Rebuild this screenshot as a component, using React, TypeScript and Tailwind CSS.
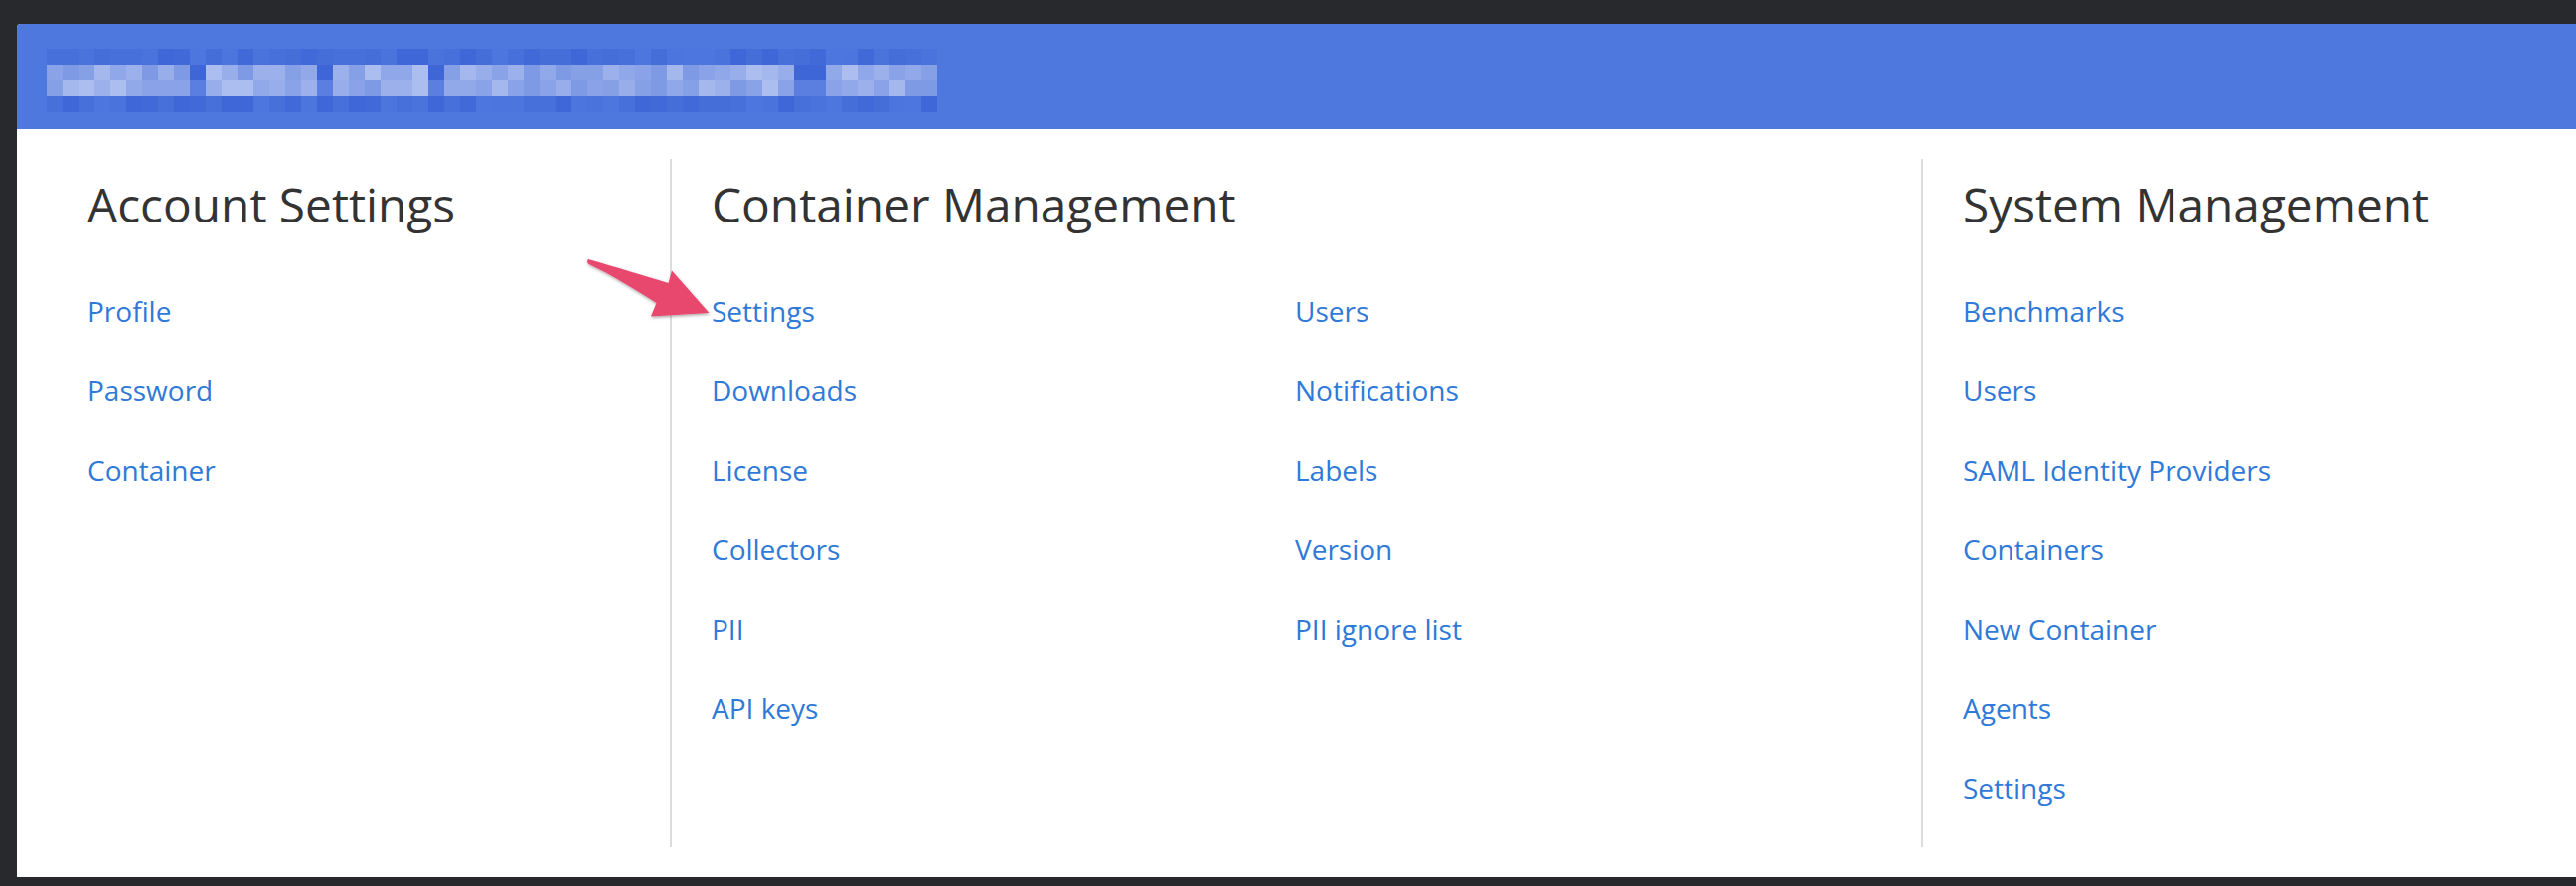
import React from "react";

const FONT = { fontFamily: '"Open Sans", "Noto Sans", sans-serif' };

function Mosaic() {
  const cols = 56;
  const gaps = new Set([9, 17, 24, 47, 48]);
  const light = ["#8aa3e8", "#91a9e9", "#9cb1ec", "#7f9ae4", "#98aeeb", "#a5b8ee", "#86a0e6", "#acbdf0", "#90a8ea"];
  const dark = ["#4a73dc", "#456ed9", "#4d76de", "#4870db", "#4269d8", "#4c75dd", "#4067d7"];
  let seed = 7;
  const rnd = () => {
    seed = (seed * 9301 + 49297) % 233280;
    return seed / 233280;
  };
  const rects: React.ReactElement[] = [];
  for (let r = 0; r < 4; r++) {
    for (let c = 0; c < cols; c++) {
      let fill: string;
      if (r === 0 || r === 3) {
        fill = dark[Math.floor(rnd() * dark.length)];
      } else if (gaps.has(c)) {
        fill = r === 1 ? "#3f66d6" : "#5a7fe0";
      } else {
        fill = light[Math.floor(rnd() * light.length)];
      }
      rects.push(<rect key={`${r}-${c}`} x={c * 16} y={r * 16} width={16.5} height={16.5} fill={fill} />);
    }
  }
  return (
    <svg width={896} height={64} viewBox="0 0 896 64" className="block">
      {rects}
    </svg>
  );
}

function Arrow() {
  return (
    <svg
      className="absolute left-[580px] top-[250px] pointer-events-none"
      width={150}
      height={80}
      viewBox="0 0 150 80"
    >
      <defs>
        <filter id="sh" x="-20%" y="-20%" width="140%" height="140%">
          <feDropShadow dx="0.5" dy="1.5" stdDeviation="1.5" floodColor="#000" floodOpacity="0.35" />
        </filter>
      </defs>
      <path
        d="M 12 11 C 40 19, 70 28, 92.5 35 L 96 22.5 L 133.5 65 L 75 68.5 L 80.5 55 C 60 42, 36 27, 14.5 17 Q 9 14.5 12 11 Z"
        fill="#e8476e"
        filter="url(#sh)"
      />
    </svg>
  );
}

function Link({ children }: { children: React.ReactNode }) {
  return (
    <a href="#" className="block text-[28px] leading-[40px] text-[#2f7ad8] whitespace-nowrap">
      {children}
    </a>
  );
}

function Heading({ children }: { children: React.ReactNode }) {
  return <h2 className="text-[47.8px] leading-[56px] text-[#333333] font-normal whitespace-nowrap">{children}</h2>;
}

function LinkList({ items }: { items: string[] }) {
  return (
    <div className="flex flex-col gap-[40.1px]">
      {items.map((t) => (
        <Link key={t}>{t}</Link>
      ))}
    </div>
  );
}

export default function App() {
  return (
    <div className="relative w-[2592px] h-[892px] bg-[#28292d] pt-[24px] pl-[17px] overflow-hidden" style={FONT}>
      <div className="w-[2620px] h-[859px] bg-white rounded-tl-[4px] overflow-hidden flex flex-col">
        <div className="h-[106px] bg-[#4f78de] pl-[30px] pt-[25px] shrink-0">
          <Mosaic />
        </div>
        <div className="flex pt-[30px]">
          <div className="w-[657px] h-[693px] pl-[71px] pt-[18px] shrink-0">
            <Heading>Account Settings</Heading>
            <div className="mt-[58.5px]">
              <LinkList items={["Profile", "Password", "Container"]} />
            </div>
          </div>
          <div className="w-[1259px] h-[693px] border-l-2 border-[#dcdcdc] pl-[40px] pt-[18px] shrink-0">
            <Heading>Container Management</Heading>
            <div className="mt-[58.5px] grid grid-cols-[587px_587px]">
              <LinkList items={["Settings", "Downloads", "License", "Collectors", "PII", "API keys"]} />
              <LinkList items={["Users", "Notifications", "Labels", "Version", "PII ignore list"]} />
            </div>
          </div>
          <div className="w-[680px] h-[693px] border-l-2 border-[#dcdcdc] pl-[40px] pt-[18px] shrink-0">
            <Heading>System Management</Heading>
            <div className="mt-[58.5px]">
              <LinkList
                items={["Benchmarks", "Users", "SAML Identity Providers", "Containers", "New Container", "Agents", "Settings"]}
              />
            </div>
          </div>
        </div>
      </div>
      <Arrow />
    </div>
  );
}
